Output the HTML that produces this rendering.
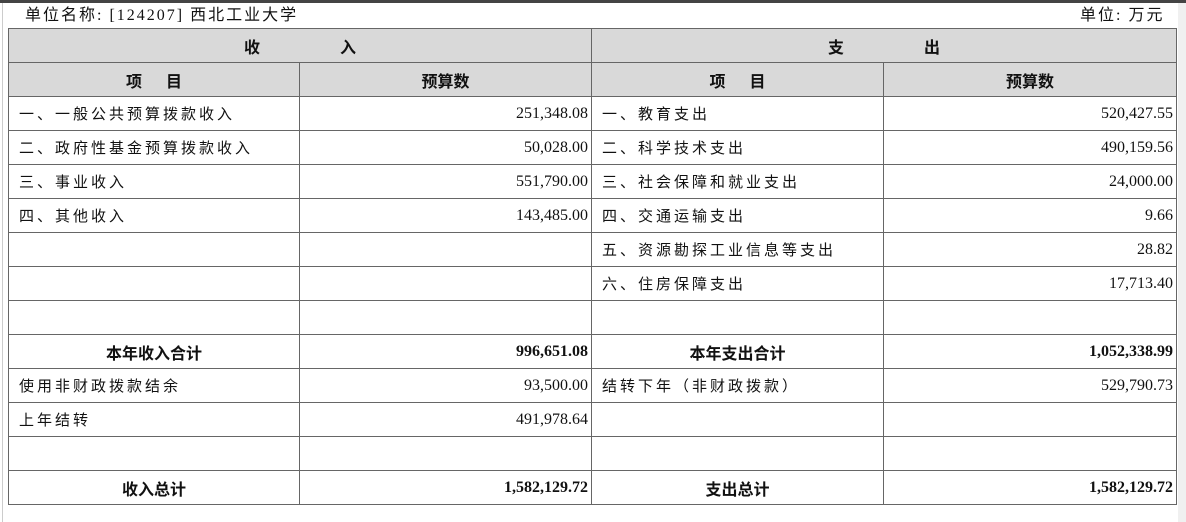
<!DOCTYPE html>
<html><head><meta charset="utf-8"><style>
body{margin:0;width:1186px;height:522px;background:#fff;position:relative;overflow:hidden;font-family:"Liberation Serif","Noto Serif CJK SC",serif;color:#111}
.topbar{position:absolute;left:0;top:0;width:1186px;height:3px;background:#444}
.lside{position:absolute;left:2px;top:3px;width:1px;height:519px;background:#ccc}
.rside{position:absolute;left:1178px;top:3px;width:8px;height:519px;background:#f0f0f0}
.t1{position:absolute;left:25px;top:1px;font-size:16px;letter-spacing:2px;font-family:"Liberation Serif","Noto Sans CJK SC",sans-serif}
.t2{position:absolute;left:1080px;top:1px;font-size:16px;letter-spacing:2px;font-family:"Liberation Serif","Noto Sans CJK SC",sans-serif}
table{position:absolute;left:8px;top:28px;border-collapse:collapse;table-layout:fixed}
td{border:1px solid #666;height:33px;padding:0 3px;font-size:15px;white-space:nowrap}
.h{background:#d9d9d9;text-align:center;font-weight:bold;font-size:16px;font-family:"Liberation Sans","Noto Sans CJK SC",sans-serif}
.c{font-family:"Liberation Sans","Noto Sans CJK SC",sans-serif;letter-spacing:3px;padding-left:10px}
.n{text-align:right;padding-right:3px;font-size:16px}
.b{font-weight:bold}
.cb{text-align:center;font-weight:bold;font-size:16px;font-family:"Liberation Sans","Noto Sans CJK SC",sans-serif}
</style></head><body>
<div class="topbar"></div><div class="lside"></div><div class="rside"></div>
<div class="t1">单位名称: [124207] 西北工业大学</div>
<div class="t2">单位: 万元</div>
<table>
<colgroup><col style="width:291px"><col style="width:292px"><col style="width:292px"><col style="width:293px"></colgroup>
<tr><td class="h" colspan="2">收&emsp;&emsp;&emsp;&emsp;&emsp;入</td><td class="h" colspan="2">支&emsp;&emsp;&emsp;&emsp;&emsp;出</td></tr>
<tr><td class="h">项&emsp;&ensp;目</td><td class="h">预算数</td><td class="h">项&emsp;&ensp;目</td><td class="h">预算数</td></tr>
<tr><td class="c">一、一般公共预算拨款收入</td><td class="n">251,348.08</td><td class="c">一、教育支出</td><td class="n">520,427.55</td></tr>
<tr><td class="c">二、政府性基金预算拨款收入</td><td class="n">50,028.00</td><td class="c">二、科学技术支出</td><td class="n">490,159.56</td></tr>
<tr><td class="c">三、事业收入</td><td class="n">551,790.00</td><td class="c">三、社会保障和就业支出</td><td class="n">24,000.00</td></tr>
<tr><td class="c">四、其他收入</td><td class="n">143,485.00</td><td class="c">四、交通运输支出</td><td class="n">9.66</td></tr>
<tr><td></td><td></td><td class="c">五、资源勘探工业信息等支出</td><td class="n">28.82</td></tr>
<tr><td></td><td></td><td class="c">六、住房保障支出</td><td class="n">17,713.40</td></tr>
<tr><td></td><td></td><td></td><td></td></tr>
<tr><td class="cb">本年收入合计</td><td class="n b">996,651.08</td><td class="cb">本年支出合计</td><td class="n b">1,052,338.99</td></tr>
<tr><td class="c">使用非财政拨款结余</td><td class="n">93,500.00</td><td class="c">结转下年（非财政拨款）</td><td class="n">529,790.73</td></tr>
<tr><td class="c">上年结转</td><td class="n">491,978.64</td><td></td><td></td></tr>
<tr><td></td><td></td><td></td><td></td></tr>
<tr><td class="cb">收入总计</td><td class="n b">1,582,129.72</td><td class="cb">支出总计</td><td class="n b">1,582,129.72</td></tr>
</table>
</body></html>
